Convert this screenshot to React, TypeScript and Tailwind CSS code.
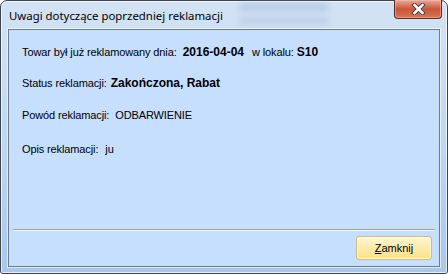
import React from "react";

function CloseGlyph() {
  return (
    <svg width="15" height="12" viewBox="0 0 15 12">
      <path d="M3.5 2 L11.5 10 M11.5 2 L3.5 10" stroke="#3b3f4a" strokeWidth="4.4" strokeLinecap="square" fill="none" />
      <path d="M3.5 2 L11.5 10 M11.5 2 L3.5 10" stroke="#ffffff" strokeWidth="2.5" strokeLinecap="square" fill="none" />
    </svg>
  );
}

export default function App() {
  const body = { fontFamily: '"Liberation Sans", Arial, sans-serif' };
  return (
    <div className="w-[448px] h-[274px] overflow-hidden bg-white">
      <div className="relative w-[448px] h-[274px] flex flex-col rounded-t-[7px] rounded-b-[3px] border border-[#3d4450] bg-gradient-to-b from-[#d3e3f5] via-[#c0d7f0] to-[#a9c8ea] shadow-[inset_0_0_0_1px_rgba(255,255,255,0.7)]">
        <div className="absolute left-[238px] top-[2px] w-[90px] h-[8px] rounded-full bg-[#8fa9c8] opacity-40 blur-[3px]" />
        <div className="absolute left-[238px] top-[16px] w-[90px] h-[7px] rounded-full bg-[#8fa9c8] opacity-30 blur-[3px]" />
        <div className="relative flex items-start justify-between h-[28px] shrink-0">
          <div
            className="pl-[8px] pt-[7px] text-[11.4px] leading-[16px] text-black"
            style={{ fontFamily: '"Noto Sans", "Open Sans", sans-serif' }}
          >
            Uwagi dotyczące poprzedniej reklamacji
          </div>
          <div className="mr-[5px] w-[48px] h-[19px] -mt-px flex items-center justify-center rounded-b-[4px] border border-t-0 border-[#5e2a22] bg-gradient-to-b from-[#e9a99a] via-[#c9553a] to-[#d87556] shadow-[inset_0_0_0_1px_rgba(255,200,180,0.45)]">
            <CloseGlyph />
          </div>
        </div>
        <div className="relative mx-[7px] mb-[6px] flex-1 flex flex-col border border-[#6c7b8e] bg-[#c6dffe] shadow-[0_0_0_1px_rgba(255,255,255,0.6)]" style={body}>
          <div className="flex flex-col pl-[13px] pt-[12px] text-black tracking-[-0.12px]">
            <div className="h-[20px] flex items-center text-[11px]">
              <span>Towar był już reklamowany dnia:</span>
              <span className="ml-[6px] font-bold text-[12px] tracking-normal">2016-04-04</span>
              <span className="ml-[8px]">w lokalu:</span>
              <span className="ml-[3px] font-bold text-[12px] tracking-normal">S10</span>
            </div>
            <div className="h-[20px] mt-[11px] flex items-center text-[11px]">
              <span>Status reklamacji:</span>
              <span className="ml-[4px] font-bold text-[12px] tracking-normal">Zakończona, Rabat</span>
            </div>
            <div className="h-[20px] mt-[12px] flex items-center text-[11px]">
              <span>Powód reklamacji:</span>
              <span className="ml-[6px]">ODBARWIENIE</span>
            </div>
            <div className="h-[20px] mt-[14px] flex items-center text-[11px]">
              <span>Opis reklamacji:</span>
              <span className="ml-[7px]">ju</span>
            </div>
          </div>
          <div className="mt-auto mx-[4px] border-t border-[#a0a0a0] border-b border-b-[#f4f8fd]" />
          <div className="flex justify-end pr-[7px] pt-[5px] pb-[6px]">
            <div className="w-[76px] h-[24px] flex items-center justify-center rounded-[3px] border border-[#d9bb63] bg-gradient-to-b from-[#fff6d6] via-[#feeaa8] to-[#fde08a] shadow-[inset_0_0_0_1px_rgba(255,255,255,0.7)] text-[11px] text-black">
              <span><span className="underline">Z</span>amknij</span>
            </div>
          </div>
        </div>
      </div>
    </div>
  );
}
